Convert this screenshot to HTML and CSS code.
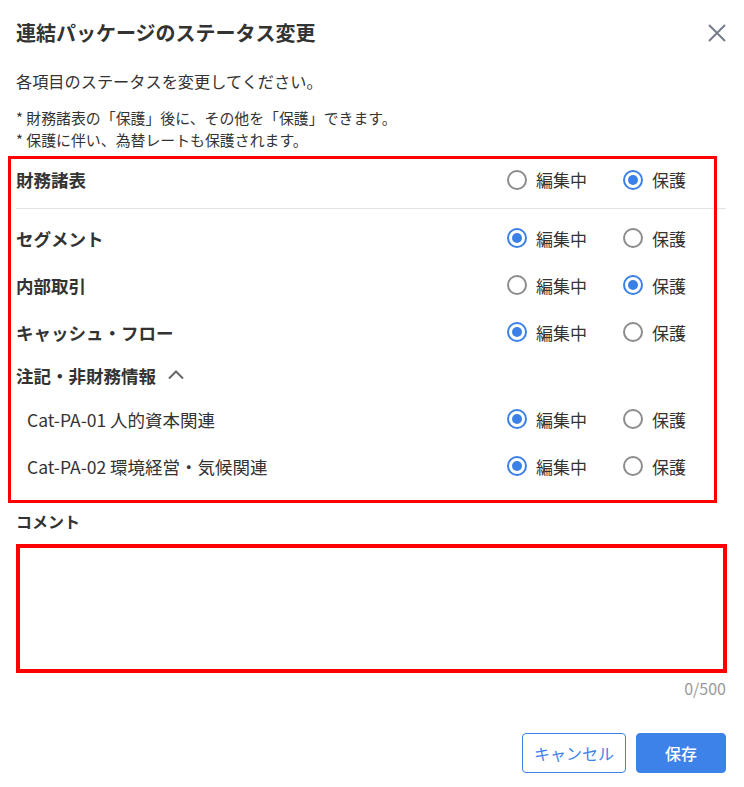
FILE: index.html
```html
<!DOCTYPE html>
<html lang="ja">
<head>
<meta charset="utf-8">
<title>連結パッケージのステータス変更</title>
<link rel="stylesheet" href="styles.css">
</head>
<body>
<div class="dialog">
  <div class="dialog-header">
    <h1 class="dialog-title">連結パッケージのステータス変更</h1>
    <button class="close-btn" aria-label="閉じる">
      <svg width="18" height="18" viewBox="0 0 18 18"><path d="M1 1L17 17M17 1L1 17" stroke="#777c8b" stroke-width="2" fill="none"/></svg>
    </button>
  </div>
  <p class="description">各項目のステータスを変更してください。</p>
  <div class="notes">
    <p>* 財務諸表の「保護」後に、その他を「保護」できます。</p>
    <p>* 保護に伴い、為替レートも保護されます。</p>
  </div>

  <div class="status-list highlight-box">
    <div class="status-row">
      <span class="row-label">財務諸表</span>
      <div class="options">
        <label class="option"><span class="radio"></span>編集中</label>
        <label class="option"><span class="radio checked"></span>保護</label>
      </div>
    </div>
    <div class="divider"></div>
    <div class="status-row">
      <span class="row-label">セグメント</span>
      <div class="options">
        <label class="option"><span class="radio checked"></span>編集中</label>
        <label class="option"><span class="radio"></span>保護</label>
      </div>
    </div>
    <div class="status-row">
      <span class="row-label">内部取引</span>
      <div class="options">
        <label class="option"><span class="radio"></span>編集中</label>
        <label class="option"><span class="radio checked"></span>保護</label>
      </div>
    </div>
    <div class="status-row">
      <span class="row-label">キャッシュ・フロー</span>
      <div class="options">
        <label class="option"><span class="radio checked"></span>編集中</label>
        <label class="option"><span class="radio"></span>保護</label>
      </div>
    </div>
    <div class="group-header">
      <span class="row-label">注記・非財務情報</span>
      <svg class="chevron" width="16" height="10" viewBox="0 0 16 10"><path d="M1 8.5L8 1.5L15 8.5" stroke="#666" stroke-width="2" fill="none"/></svg>
    </div>
    <div class="status-row sub">
      <span class="sub-label">Cat-PA-01 人的資本関連</span>
      <div class="options">
        <label class="option"><span class="radio checked"></span>編集中</label>
        <label class="option"><span class="radio"></span>保護</label>
      </div>
    </div>
    <div class="status-row sub">
      <span class="sub-label">Cat-PA-02 環境経営・気候関連</span>
      <div class="options">
        <label class="option"><span class="radio checked"></span>編集中</label>
        <label class="option"><span class="radio"></span>保護</label>
      </div>
    </div>
  </div>

  <div class="comment-label">コメント</div>
  <div class="comment-box highlight-input">
    <textarea class="comment-input"></textarea>
  </div>
  <div class="counter">0/500</div>

  <div class="actions">
    <button class="btn btn-outline">キャンセル</button>
    <button class="btn btn-primary">保存</button>
  </div>
</div>
</body>
</html>
```
FILE: styles.css
```css
* { box-sizing: border-box; }
html, body { margin: 0; padding: 0; background: #fff; }
body {
  font-family: "Noto Sans CJK JP", "Noto Sans", sans-serif;
  color: #333;
}
.dialog {
  width: 744px;
  padding: 19px 18px 0 16px;
}
.dialog-header {
  display: flex;
  align-items: center;
  justify-content: space-between;
  height: 28px;
}
.dialog-title {
  margin: 0;
  font-size: 20px;
  line-height: 28px;
  font-weight: 700;
  color: #333;
}
.close-btn {
  border: 0;
  background: none;
  padding: 0;
  width: 18px;
  height: 18px;
  display: flex;
  margin-top: -1px;
}
.description {
  margin: 22px 0 0;
  font-size: 16.2px;
  line-height: 24px;
  color: #333;
}
.notes {
  margin-top: 14px;
  font-size: 14.9px;
  line-height: 22px;
  color: #333;
}
.notes p { margin: 0; }

.status-list {
  margin-top: 5px;
  padding-bottom: 13px;
}
.highlight-box, .highlight-input { position: relative; }
.highlight-box::after {
  content: "";
  position: absolute;
  top: 0;
  left: -8px;
  right: 9px;
  bottom: 0;
  border: 3px solid #ff0000;
  pointer-events: none;
}
.status-row {
  display: flex;
  align-items: center;
  justify-content: space-between;
  height: 47px;
  padding-bottom: 1px;
}
.status-row:first-child { height: 48px; }
.row-label {
  font-size: 17.5px;
  font-weight: 700;
  color: #333;
}
.sub-label {
  font-size: 17.5px;
  color: #333;
  padding-left: 11px;
}
.divider {
  height: 1px;
  background: #e3e3e3;
  margin: 4px 0 6px;
}
.group-header {
  display: flex;
  align-items: center;
  height: 40px;
  gap: 12px;
  padding-bottom: 2px;
}
.chevron { display: block; }
.options {
  display: flex;
  align-items: center;
  gap: 36px;
  padding-right: 40px;
}
.option {
  display: flex;
  align-items: center;
  gap: 9px;
  font-size: 17px;
  color: #333;
}
.radio {
  width: 20px;
  height: 20px;
  border-radius: 50%;
  border: 2px solid #8c8c8c;
  display: flex;
  align-items: center;
  justify-content: center;
}
.radio.checked { border-color: #3b80e6; }
.radio.checked::after {
  content: "";
  width: 10px;
  height: 10px;
  border-radius: 50%;
  background: #3b80e6;
}

.comment-label {
  margin-top: 8px;
  font-size: 16px;
  line-height: 20px;
  font-weight: 700;
  color: #333;
}
.comment-box {
  margin-top: 13px;
  height: 129px;
}
.comment-box::after {
  content: "";
  position: absolute;
  top: 0;
  left: 0;
  right: -1px;
  bottom: 0;
  border: 4px solid #ff0000;
  pointer-events: none;
}
.comment-input {
  display: block;
  width: 100%;
  height: 100%;
  border: 1px solid #ccc;
  border-radius: 4px;
  resize: none;
  font-family: inherit;
}
.counter {
  text-align: right;
  font-size: 16px;
  line-height: 22px;
  color: #9a9a9a;
  margin-top: 4px;
}
.actions {
  display: flex;
  justify-content: flex-end;
  gap: 10px;
  margin-top: 34px;
}
.btn {
  height: 40px;
  border-radius: 4px;
  font-family: inherit;
  font-size: 16px;
  cursor: pointer;
}
.btn-outline {
  width: 104px;
  background: #fff;
  border: 1px solid #3d82e8;
  color: #3d82e8;
}
.btn-primary {
  width: 90px;
  background: #3d82e8;
  border: 1px solid #3d82e8;
  color: #fff;
  font-weight: 500;
}
```
